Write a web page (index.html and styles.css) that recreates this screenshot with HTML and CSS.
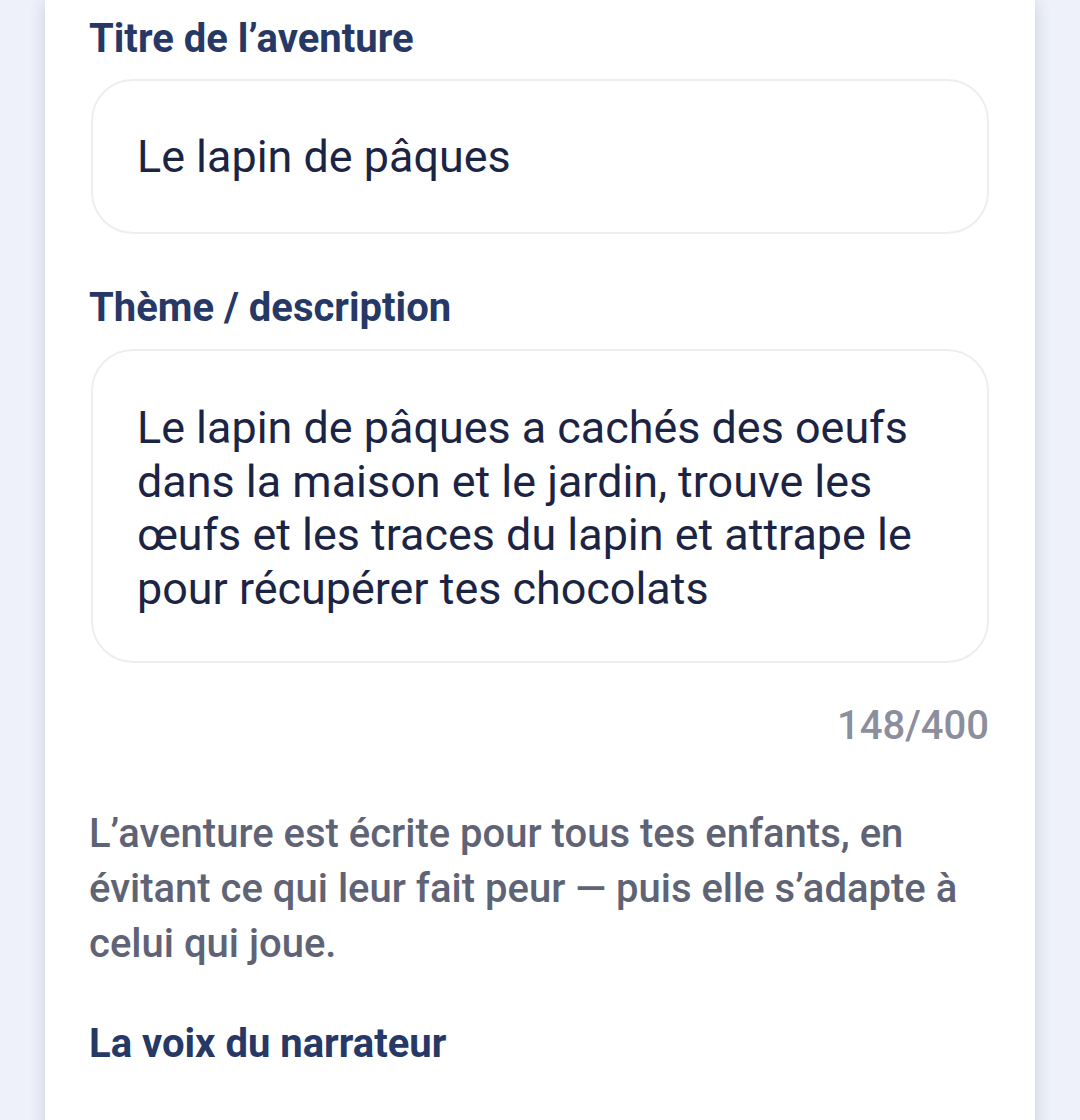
FILE: index.html
```html
<!DOCTYPE html>
<html lang="fr">
<head>
<meta charset="utf-8">
<title>Aventure</title>
<link rel="stylesheet" href="styles.css">
</head>
<body>
<main class="card">
  <div class="label">Titre de l’aventure</div>
  <div class="field field-input">Le lapin de pâques</div>
  <div class="label label-gap">Thème / description</div>
  <div class="field field-area">Le lapin de pâques a cachés des oeufs dans la maison et le jardin, trouve les œufs et les traces du lapin et attrape le pour récupérer tes chocolats</div>
  <div class="counter">148/400</div>
  <p class="helper">L’aventure est écrite pour tous tes enfants, en évitant ce qui leur fait peur — puis elle s’adapte à celui qui joue.</p>
  <div class="label label-voice">La voix du narrateur</div>
</main>
</body>
</html>
```
FILE: styles.css
```css
html, body {
  margin: 0;
  padding: 0;
}
body {
  background: #eef1f9;
  font-family: Roboto, "Noto Sans", "Liberation Sans", sans-serif;
  height: 1120px;
  overflow: hidden;
}
.card {
  box-sizing: border-box;
  width: 990px;
  min-height: 1200px;
  margin: 0 45px;
  padding: 15px 46px 0 46px;
  background: #ffffff;
  box-shadow: 0 0 16px rgba(40, 52, 110, 0.16);
}
.label {
  font-size: 40px;
  line-height: 48px;
  font-weight: 700;
  color: #263865;
  margin-bottom: 16px;
  margin-left: -2px;
}
.label-gap {
  margin-top: 50px;
  margin-bottom: 17px;
}
.label-voice {
  margin-top: 49px;
}
.field {
  border: 2px solid #eeeef2;
  border-radius: 42px;
  color: #1b2444;
  font-size: 44.9px;
  line-height: 54px;
  font-weight: 400;
}
.field-input {
  padding: 49px 46px 48px 44px;
}
.field-area {
  padding: 50px 47px 46px 44px;
  line-height: 53.5px;
}
.counter {
  margin-top: 39px;
  text-align: right;
  font-size: 40px;
  line-height: 48px;
  font-weight: 500;
  color: #8b8e9c;
}
.helper {
  margin: 56px 0 0 -2px;
  font-size: 40px;
  line-height: 55px;
  font-weight: 500;
  color: #5f6376;
}
```
